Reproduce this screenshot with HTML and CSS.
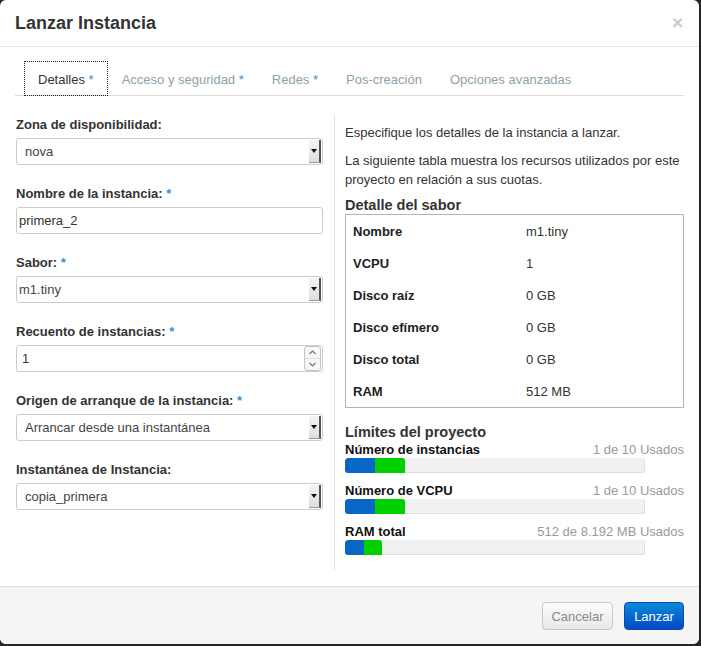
FILE: index.html
```html
<!DOCTYPE html>
<html lang="es">
<head>
<meta charset="utf-8">
<title>Lanzar Instancia</title>
<link rel="stylesheet" href="styles.css">
</head>
<body>
<div class="modal">
  <div class="modal-header">
    <h3 class="title">Lanzar Instancia</h3>
    <span class="close">×</span>
  </div>
  <div class="modal-body">
    <ul class="tabs">
      <li class="tab active">Detalles <span class="req">*</span></li>
      <li class="tab">Acceso y seguridad <span class="req">*</span></li>
      <li class="tab">Redes <span class="req">*</span></li>
      <li class="tab">Pos-creación</li>
      <li class="tab">Opciones avanzadas</li>
    </ul>
    <div class="cols">
      <div class="form-col">
        <div class="group">
          <div class="label">Zona de disponibilidad:</div>
          <div class="select"><span class="val">nova</span><span class="arrow"><span class="tri"></span></span></div>
        </div>
        <div class="group">
          <div class="label">Nombre de la instancia: <span class="req">*</span></div>
          <div class="input">primera_2</div>
        </div>
        <div class="group">
          <div class="label">Sabor: <span class="req">*</span></div>
          <div class="select tight"><span class="val">m1.tiny</span><span class="arrow"><span class="tri"></span></span></div>
        </div>
        <div class="group">
          <div class="label">Recuento de instancias: <span class="req">*</span></div>
          <div class="input number"><span class="val">1</span>
            <span class="spin">
              <span class="spin-btn"><svg width="7" height="5" viewBox="0 0 7 5"><path d="M0.5 4 L3.5 1 L6.5 4" fill="none" stroke="#777" stroke-width="1.2"/></svg></span>
              <span class="spin-btn"><svg width="7" height="5" viewBox="0 0 7 5"><path d="M0.5 1 L3.5 4 L6.5 1" fill="none" stroke="#777" stroke-width="1.2"/></svg></span>
            </span>
          </div>
        </div>
        <div class="group">
          <div class="label">Origen de arranque de la instancia: <span class="req">*</span></div>
          <div class="select"><span class="val">Arrancar desde una instantánea</span><span class="arrow"><span class="tri"></span></span></div>
        </div>
        <div class="group">
          <div class="label">Instantánea de Instancia:</div>
          <div class="select"><span class="val">copia_primera</span><span class="arrow"><span class="tri"></span></span></div>
        </div>
      </div>
      <div class="info-col">
        <p class="p1">Especifique los detalles de la instancia a lanzar.</p>
        <p class="p2">La siguiente tabla muestra los recursos utilizados por este<br>proyecto en relación a sus cuotas.</p>
        <h4 class="sub">Detalle del sabor</h4>
        <div class="flavor">
          <div class="row"><span class="k">Nombre</span><span class="v">m1.tiny</span></div>
          <div class="row"><span class="k">VCPU</span><span class="v">1</span></div>
          <div class="row"><span class="k">Disco raíz</span><span class="v">0 GB</span></div>
          <div class="row"><span class="k">Disco efímero</span><span class="v">0 GB</span></div>
          <div class="row"><span class="k">Disco total</span><span class="v">0 GB</span></div>
          <div class="row"><span class="k">RAM</span><span class="v">512 MB</span></div>
        </div>
        <h4 class="sub limits-title">Límites del proyecto</h4>
        <div class="limit">
          <div class="limit-head"><span class="lname">Número de instancias</span><span class="used">1 de 10 Usados</span></div>
          <div class="bar"><span class="seg blue" style="width:30px"></span><span class="seg green" style="width:30px"></span></div>
        </div>
        <div class="limit">
          <div class="limit-head"><span class="lname">Número de VCPU</span><span class="used">1 de 10 Usados</span></div>
          <div class="bar"><span class="seg blue" style="width:30px"></span><span class="seg green" style="width:30px"></span></div>
        </div>
        <div class="limit">
          <div class="limit-head"><span class="lname">RAM total</span><span class="used">512 de 8.192 MB Usados</span></div>
          <div class="bar"><span class="seg blue" style="width:19px"></span><span class="seg green" style="width:18px"></span></div>
        </div>
      </div>
    </div>
  </div>
  <div class="modal-footer">
    <span class="btn btn-cancel">Cancelar</span>
    <span class="btn btn-primary">Lanzar</span>
  </div>
</div>
</body>
</html>
```
FILE: styles.css
```css
html, body {
  margin: 0;
  padding: 0;
}
body {
  background: #262626;
  width: 701px;
  height: 646px;
  font-family: "Liberation Sans", Arial, Helvetica, sans-serif;
  font-size: 13px;
  color: #333;
}
.modal {
  width: 699px;
  height: 644px;
  background: #fff;
  border-radius: 6px;
  overflow: hidden;
  display: flex;
  flex-direction: column;
}
.modal-header {
  height: 46px;
  border-bottom: 1px solid #e5e5e5;
  padding: 0 15px;
  display: flex;
  align-items: center;
  justify-content: space-between;
  flex: none;
}
.title {
  margin: 0;
  font-size: 18px;
  font-weight: bold;
  color: #333;
}
.close {
  font-size: 19px;
  font-weight: bold;
  color: #c9c9c9;
  line-height: 20px;
  margin-right: 1px;
}
.modal-body {
  flex: 1;
  padding: 15px 15px 0 15px;
}
.tabs {
  list-style: none;
  margin: 0;
  padding: 0 0 0 10px;
  height: 33px;
  border-bottom: 1px solid #ddd;
  display: flex;
}
.tab {
  height: 33px;
  line-height: 35px;
  padding: 0 13px;
  margin-right: 2px;
  color: #8ea1ad;
  white-space: nowrap;
}
.tab.active {
  color: #333;
  outline: 1px dotted #222;
  background: #fff;
}
.req {
  color: #3d8fd0;
}
.cols {
  margin-top: 19px;
  height: 455px;
  display: flex;
}
.form-col {
  width: 318px;
  padding-left: 1px;
  border-right: 1px solid #e2e2e2;
  flex: none;
}
.group {
  margin-bottom: 19px;
}
.label {
  font-weight: bold;
  line-height: 20px;
  height: 20px;
  margin-bottom: 3px;
  color: #333;
}
.select, .input {
  box-sizing: border-box;
  width: 307px;
  height: 27px;
  border: 1px solid #ccc;
  border-radius: 3px;
  display: flex;
  align-items: center;
  color: #444;
  background: #fff;
}
.select {
  padding: 1px 1px 1px 8px;
  align-items: stretch;
}
.select.tight {
  padding-left: 2px;
}
.select .val {
  flex: 1;
  display: flex;
  align-items: center;
}
.arrow {
  width: 10px;
  background: linear-gradient(#f4f4f4, #dedede);
  border-right: 2px solid #555;
  border-bottom: 1px solid #999;
  display: flex;
  align-items: center;
  justify-content: center;
}
.tri {
  width: 0;
  height: 0;
  border-left: 3px solid transparent;
  border-right: 3px solid transparent;
  border-top: 4px solid #111;
}
.input {
  padding-left: 2px;
  color: #333;
}
.input.number {
  padding: 0 1px 0 5px;
}
.input.number .val {
  flex: 1;
}
.spin {
  width: 15px;
  height: 23px;
  border: 1px solid #c4c4c4;
  border-radius: 3px;
  display: flex;
  flex-direction: column;
  background: #f7f7f7;
}
.spin-btn {
  flex: 1;
  display: flex;
  align-items: center;
  justify-content: center;
}
.spin-btn + .spin-btn {
  border-top: 1px solid #ddd;
}
.info-col {
  width: 339px;
  padding-left: 10px;
}
.info-col p {
  margin: 0;
  line-height: 19px;
  color: #333;
}
.p1 {
  margin-top: 8px !important;
}
.p2 {
  margin-top: 9px !important;
}
.sub {
  margin: 7px 0 0 0;
  font-size: 14.5px;
  font-weight: bold;
  line-height: 18px;
  color: #333;
}
.flavor {
  border: 1px solid #b4b4b4;
  height: 192px;
}
.row {
  height: 32px;
  display: flex;
  align-items: center;
  padding-left: 7px;
}
.row .k {
  width: 173px;
  font-weight: bold;
  color: #222;
}
.row .v {
  color: #333;
}
.limits-title {
  margin-top: 15px;
}
.limit + .limit {
  margin-top: 9px;
}
.limit-head {
  display: flex;
  justify-content: space-between;
  line-height: 16px;
  height: 16px;
  padding-top: 1px;
}
.lname {
  font-weight: bold;
  color: #111;
}
.used {
  color: #9a9a9a;
}
.bar {
  margin-top: 0;
  width: 300px;
  height: 15px;
  background: #f1f1f1;
  border-radius: 3px;
  box-shadow: inset -1px -1px 0 #dedede;
  display: flex;
  overflow: hidden;
}
.seg {
  height: 100%;
}
.seg.blue {
  background: #0866c6;
  border-radius: 3px 0 0 0;
}
.seg.green {
  background: #00cf00;
  border-radius: 0 3px 0 0;
}
.modal-footer {
  flex: none;
  height: 42px;
  padding: 15px 15px 0 15px;
  background: #f5f5f5;
  border-top: 1px solid #ddd;
  display: flex;
  justify-content: flex-end;
  align-items: flex-start;
  gap: 11px;
}
.btn {
  box-sizing: border-box;
  height: 28px;
  border-radius: 4px;
  display: flex;
  align-items: center;
  justify-content: center;
  font-size: 13px;
}
.btn-cancel {
  width: 71px;
  border: 1px solid #c8c8c8;
  background: linear-gradient(#fdfdfd, #e8e8e8);
  color: #8a8a8a;
}
.btn-primary {
  width: 60px;
  border: 1px solid #0a4bb3;
  background: linear-gradient(#0a8ad8, #0448c8);
  color: #fff;
}
```
